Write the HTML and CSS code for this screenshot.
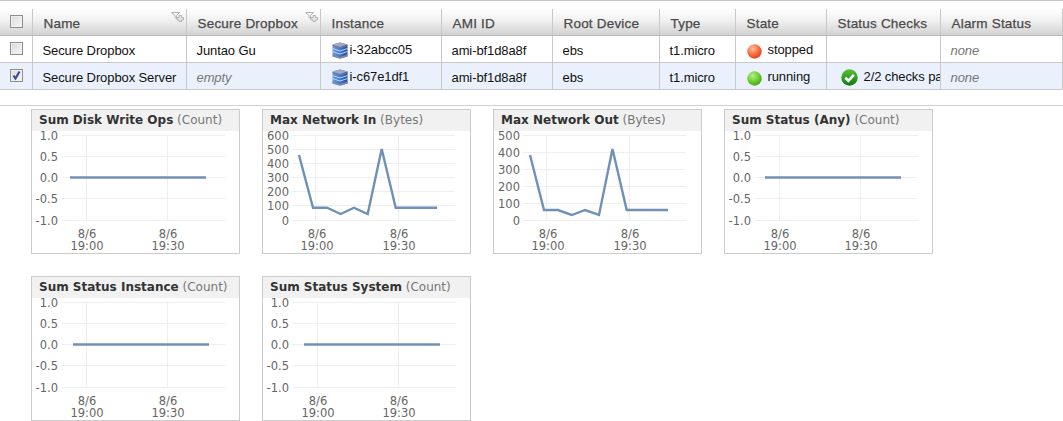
FILE: index.html
```html
<!DOCTYPE html>
<html lang="en">
<head>
<meta charset="UTF-8">
<meta name="viewport" content="width=device-width, initial-scale=1.0">
<title>Instances</title>
<link rel="stylesheet" href="styles.css">
</head>
<body>
<svg class="defs" width="0" height="0">
  <defs>
    <linearGradient id="dbBody" x1="0" x2="1" y1="0" y2="0">
      <stop offset="0" stop-color="#6f9ae0"/>
      <stop offset="0.5" stop-color="#3f78d0"/>
      <stop offset="1" stop-color="#27489a"/>
    </linearGradient>
    <radialGradient id="redBall" cx="0.38" cy="0.3" r="0.8">
      <stop offset="0" stop-color="#ffc0a0"/>
      <stop offset="0.55" stop-color="#f8683a"/>
      <stop offset="1" stop-color="#d83a12"/>
    </radialGradient>
    <radialGradient id="greenBall" cx="0.38" cy="0.3" r="0.8">
      <stop offset="0" stop-color="#b4ee88"/>
      <stop offset="0.55" stop-color="#6ccb2c"/>
      <stop offset="1" stop-color="#3c9a10"/>
    </radialGradient>
    <linearGradient id="okBall" x1="0" x2="0" y1="0" y2="1">
      <stop offset="0" stop-color="#5cc038"/>
      <stop offset="1" stop-color="#0c7a10"/>
    </linearGradient>
    <symbol id="db" viewBox="0 0 16 17">
      <path d="M0.5 2.5 L8 0.5 L15.5 2.5 V14.5 L8 16.5 L0.5 14.5 Z" fill="url(#dbBody)"/>
      <path d="M0.5 2.5 L8 0.5 L15.5 2.5 L8 5 Z" fill="#a4a8ba"/>
      <path d="M0.5 3.5 L8 6 L15.5 3.5" stroke="#70789a" fill="none"/>
      <path d="M0.5 6.5 L8 9 L15.5 6.5 M0.5 9.5 L8 12 L15.5 9.5" stroke="#b4d4f6" fill="none"/>
      <path d="M0.5 12.5 L8 15 L15.5 12.5 V14.5 L8 16.8 L0.5 14.5 Z" fill="#85889c"/>
    </symbol>
    <symbol id="filter" viewBox="0 0 13 10">
      <path d="M0.5 0.5 H8.5 L5.5 3.5 V6.5 L4 5.5 V3.5 Z" fill="#f4f4f4" stroke="#b4b4b4"/>
      <path d="M8 3.5 H10.5 V5.5 H12.5 V8 H10.5 V9.5 H8 V8 H6 V5.5 H8 Z" fill="#e4e4e4" stroke="#aaa" stroke-width="0.8"/>
    </symbol>
    <symbol id="ball-red" viewBox="0 0 15 15"><circle cx="7.5" cy="7.5" r="7.2" fill="url(#redBall)"/></symbol>
    <symbol id="ball-green" viewBox="0 0 15 15"><circle cx="7.5" cy="7.5" r="7.2" fill="url(#greenBall)"/></symbol>
    <symbol id="ok" viewBox="0 0 17 17">
      <circle cx="8.5" cy="8.5" r="8.2" fill="url(#okBall)"/>
      <path d="M4.3 8.8 L7.4 11.8 L12.8 5.8" fill="none" stroke="#fff" stroke-width="2.6"/>
    </symbol>
  </defs>
</svg>

<div class="grid-wrap">
  <table class="instances">
    <colgroup>
      <col class="c-check"><col class="c-name"><col class="c-drop"><col class="c-inst"><col class="c-ami">
      <col class="c-root"><col class="c-type"><col class="c-state"><col class="c-checks"><col class="c-alarm">
    </colgroup>
    <thead>
      <tr>
        <th class="check-cell"><span class="box"></span></th>
        <th class="sortable">Name <svg class="filter"><use href="#filter"/></svg></th>
        <th class="sortable">Secure Dropbox <svg class="filter"><use href="#filter"/></svg></th>
        <th>Instance</th>
        <th>AMI ID</th>
        <th>Root Device</th>
        <th>Type</th>
        <th>State</th>
        <th>Status Checks</th>
        <th>Alarm Status</th>
      </tr>
    </thead>
    <tbody>
      <tr>
        <td class="check-cell"><span class="box"></span></td>
        <td>Secure Dropbox</td>
        <td>Juntao Gu</td>
        <td class="inst"><svg class="db"><use href="#db"/></svg>i-32abcc05</td>
        <td>ami-bf1d8a8f</td>
        <td>ebs</td>
        <td>t1.micro</td>
        <td><svg class="ball"><use href="#ball-red"/></svg>stopped</td>
        <td></td>
        <td class="muted">none</td>
      </tr>
      <tr class="selected">
        <td class="check-cell"><span class="box checked">
          <svg viewBox="0 0 11 11"><path d="M2.5 5.5 L4.5 8.5 L8.5 1.5" fill="none" stroke="#34489c" stroke-width="2"/></svg>
        </span></td>
        <td>Secure Dropbox Server</td>
        <td class="muted">empty</td>
        <td class="inst"><svg class="db"><use href="#db"/></svg>i-c67e1df1</td>
        <td>ami-bf1d8a8f</td>
        <td>ebs</td>
        <td>t1.micro</td>
        <td><svg class="ball"><use href="#ball-green"/></svg>running</td>
        <td class="checks"><svg class="ok"><use href="#ok"/></svg>2/2 checks passed</td>
        <td class="muted">none</td>
      </tr>
    </tbody>
  </table>
</div>

<div class="charts">

  <div class="chart">
    <div class="chart-title"><b>Sum Disk Write Ops</b> (Count)</div>
    <svg class="plot" viewBox="0 0 207 121">
      <g class="gridlines">
        <path d="M30 4.5H193M30 25.5H193M30 46.5H193M30 67.5H193M30 89.5H193M54.5 4V90M135.5 4V90"/>
      </g>
      <g class="ylabels">
        <text x="26" y="9">1.0</text><text x="26" y="30">0.5</text><text x="26" y="51">0.0</text><text x="26" y="72">-0.5</text><text x="26" y="94">-1.0</text>
      </g>
      <g class="xlabels">
        <text x="55" y="107">8/6</text><text x="55" y="119">19:00</text><text x="136" y="107">8/6</text><text x="136" y="119">19:30</text>
      </g>
      <path class="series" d="M38 46.5H174"/>
    </svg>
  </div>

  <div class="chart">
    <div class="chart-title"><b>Max Network In</b> (Bytes)</div>
    <svg class="plot" viewBox="0 0 207 121">
      <g class="gridlines">
        <path d="M29 4.5H192M29 18.5H192M29 32.5H192M29 46.5H192M29 60.5H192M29 74.5H192M29 89.5H192M52.5 4V90M135.5 4V90"/>
      </g>
      <g class="ylabels">
        <text x="26" y="9">600</text><text x="26" y="23">500</text><text x="26" y="37">400</text><text x="26" y="51">300</text><text x="26" y="65">200</text><text x="26" y="79">100</text><text x="26" y="94">0</text>
      </g>
      <g class="xlabels">
        <text x="54" y="107">8/6</text><text x="54" y="119">19:00</text><text x="136" y="107">8/6</text><text x="136" y="119">19:30</text>
      </g>
      <path class="series" d="M36 24L50 76.7L64 76.7L77.6 83L91 76.7L104.7 83L118.7 18L132.7 76.7L174 76.7"/>
    </svg>
  </div>

  <div class="chart">
    <div class="chart-title"><b>Max Network Out</b> (Bytes)</div>
    <svg class="plot" viewBox="0 0 207 121">
      <g class="gridlines">
        <path d="M29 4.5H192M29 21.5H192M29 38.5H192M29 55.5H192M29 72.5H192M29 89.5H192M52.5 4V90M135.5 4V90"/>
      </g>
      <g class="ylabels">
        <text x="26" y="9">500</text><text x="26" y="26">400</text><text x="26" y="43">300</text><text x="26" y="60">200</text><text x="26" y="77">100</text><text x="26" y="94">0</text>
      </g>
      <g class="xlabels">
        <text x="54" y="107">8/6</text><text x="54" y="119">19:00</text><text x="136" y="107">8/6</text><text x="136" y="119">19:30</text>
      </g>
      <path class="series" d="M36 24L50 79L64 79L77.7 84L91 79L105 84L118.5 18L132.7 79L174 79"/>
    </svg>
  </div>

  <div class="chart">
    <div class="chart-title"><b>Sum Status (Any)</b> (Count)</div>
    <svg class="plot" viewBox="0 0 207 121">
      <g class="gridlines">
        <path d="M30 4.5H193M30 25.5H193M30 46.5H193M30 67.5H193M30 89.5H193M54.5 4V90M135.5 4V90"/>
      </g>
      <g class="ylabels">
        <text x="26" y="9">1.0</text><text x="26" y="30">0.5</text><text x="26" y="51">0.0</text><text x="26" y="72">-0.5</text><text x="26" y="94">-1.0</text>
      </g>
      <g class="xlabels">
        <text x="55" y="107">8/6</text><text x="55" y="119">19:00</text><text x="136" y="107">8/6</text><text x="136" y="119">19:30</text>
      </g>
      <path class="series" d="M40 46.5H176"/>
    </svg>
  </div>

  <div class="chart">
    <div class="chart-title"><b>Sum Status Instance</b> (Count)</div>
    <svg class="plot" viewBox="0 0 207 121">
      <g class="gridlines">
        <path d="M30 4.5H193M30 25.5H193M30 46.5H193M30 67.5H193M30 89.5H193M54.5 4V90M135.5 4V90"/>
      </g>
      <g class="ylabels">
        <text x="26" y="9">1.0</text><text x="26" y="30">0.5</text><text x="26" y="51">0.0</text><text x="26" y="72">-0.5</text><text x="26" y="94">-1.0</text>
      </g>
      <g class="xlabels">
        <text x="55" y="107">8/6</text><text x="55" y="119">19:00</text><text x="136" y="107">8/6</text><text x="136" y="119">19:30</text>
      </g>
      <path class="series" d="M41 46.5H177"/>
    </svg>
  </div>

  <div class="chart">
    <div class="chart-title"><b>Sum Status System</b> (Count)</div>
    <svg class="plot" viewBox="0 0 207 121">
      <g class="gridlines">
        <path d="M30 4.5H193M30 25.5H193M30 46.5H193M30 67.5H193M30 89.5H193M54.5 4V90M135.5 4V90"/>
      </g>
      <g class="ylabels">
        <text x="26" y="9">1.0</text><text x="26" y="30">0.5</text><text x="26" y="51">0.0</text><text x="26" y="72">-0.5</text><text x="26" y="94">-1.0</text>
      </g>
      <g class="xlabels">
        <text x="55" y="107">8/6</text><text x="55" y="119">19:00</text><text x="136" y="107">8/6</text><text x="136" y="119">19:30</text>
      </g>
      <path class="series" d="M41 46.5H177"/>
    </svg>
  </div>

</div>
</body>
</html>
```

FILE: styles.css
```css
html, body {
  margin: 0;
  height: 421px;
  overflow: hidden;
  background-color: #fff;
}
body {
  font-family: "Liberation Sans", Arial, sans-serif;
  font-size: 13px;
  color: #222;
}
.defs {
  display: block;
  height: 0;
}

/* instance table */
.grid-wrap {
  border-top: 1px solid #c4c4c4;
  border-bottom: 1px solid #d0d0d0;
  padding-top: 8px;
  height: 96px;
}
.instances {
  border-collapse: collapse;
  table-layout: fixed;
  width: 1062px;
}
.c-check { width: 32px; }
.c-name { width: 154px; }
.c-drop { width: 134px; }
.c-inst { width: 121px; }
.c-ami { width: 111px; }
.c-root { width: 107px; }
.c-type { width: 76px; }
.c-state { width: 91px; }
.c-checks { width: 114px; }
.c-alarm { width: 122px; }

.instances th {
  position: relative;
  height: 26px;
  padding: 3px 0 0 11px;
  box-sizing: border-box;
  text-align: left;
  font-size: 13.5px;
  font-weight: normal;
  color: #4a4a4a;
  letter-spacing: 0.2px;
  -webkit-text-stroke: 0.25px #4a4a4a;
  background: linear-gradient(#fff, #f0f0f0 45%, #d2d2d2);
  border-right: 1px solid #c8c8c8;
  border-bottom: 1px solid #bbb;
}
.instances td {
  height: 27px;
  padding: 4px 0 0 10px;
  box-sizing: border-box;
  white-space: nowrap;
  overflow: hidden;
  color: #111;
  letter-spacing: -0.1px;
  border-right: 1px solid #c8c8c8;
  border-bottom: 1px solid #c8c8c8;
}
.instances tr.selected td {
  background-color: #eaf1fc;
}
.instances td.muted {
  color: #777;
  font-style: italic;
}
.instances .check-cell {
  padding: 0 0 0 10px;
}
.box {
  display: block;
  width: 11px;
  height: 11px;
  border: 1px solid #8e8e8e;
  background: linear-gradient(135deg, #d8d8d8, #f8f8f8);
  box-shadow: inset 0 0 0 1px #f0f0f0;
}
.box svg {
  display: block;
  width: 11px;
  height: 11px;
}
.filter {
  position: absolute;
  top: 3px;
  right: 2px;
  width: 13px;
  height: 10px;
}
.db {
  width: 16px;
  height: 17px;
  vertical-align: middle;
  margin-right: 2px;
}
.instances td.inst {
  padding-left: 11px;
}
.ball {
  width: 15px;
  height: 15px;
  vertical-align: middle;
  margin: 0 6px 0 1px;
}
.instances td.checks {
  padding-left: 14px;
}
.ok {
  width: 17px;
  height: 17px;
  vertical-align: middle;
  margin-right: 6px;
}

/* metric charts */
.charts {
  display: grid;
  grid-template-columns: repeat(4, 209px);
  grid-auto-rows: 145px;
  column-gap: 22px;
  row-gap: 22px;
  padding: 3px 0 0 31px;
}
.chart {
  border: 1px solid #ccc;
}
.chart-title {
  height: 21px;
  padding-left: 7px;
  background-color: #f1f1f1;
  font-family: "DejaVu Sans", Verdana, sans-serif;
  font-size: 12px;
  line-height: 20px;
  color: #777;
  white-space: nowrap;
}
.chart-title b {
  color: #333;
}
.plot {
  display: block;
  width: 207px;
  height: 121px;
  overflow: visible;
}
.plot text {
  font-family: "DejaVu Sans", Verdana, sans-serif;
  font-size: 11.5px;
  fill: #666;
}
.gridlines path {
  stroke: #eeeeee;
  fill: none;
}
.ylabels text {
  text-anchor: end;
}
.xlabels text {
  text-anchor: middle;
}
.series {
  stroke: #7090b8;
  stroke-width: 2.4;
  fill: none;
}
```
